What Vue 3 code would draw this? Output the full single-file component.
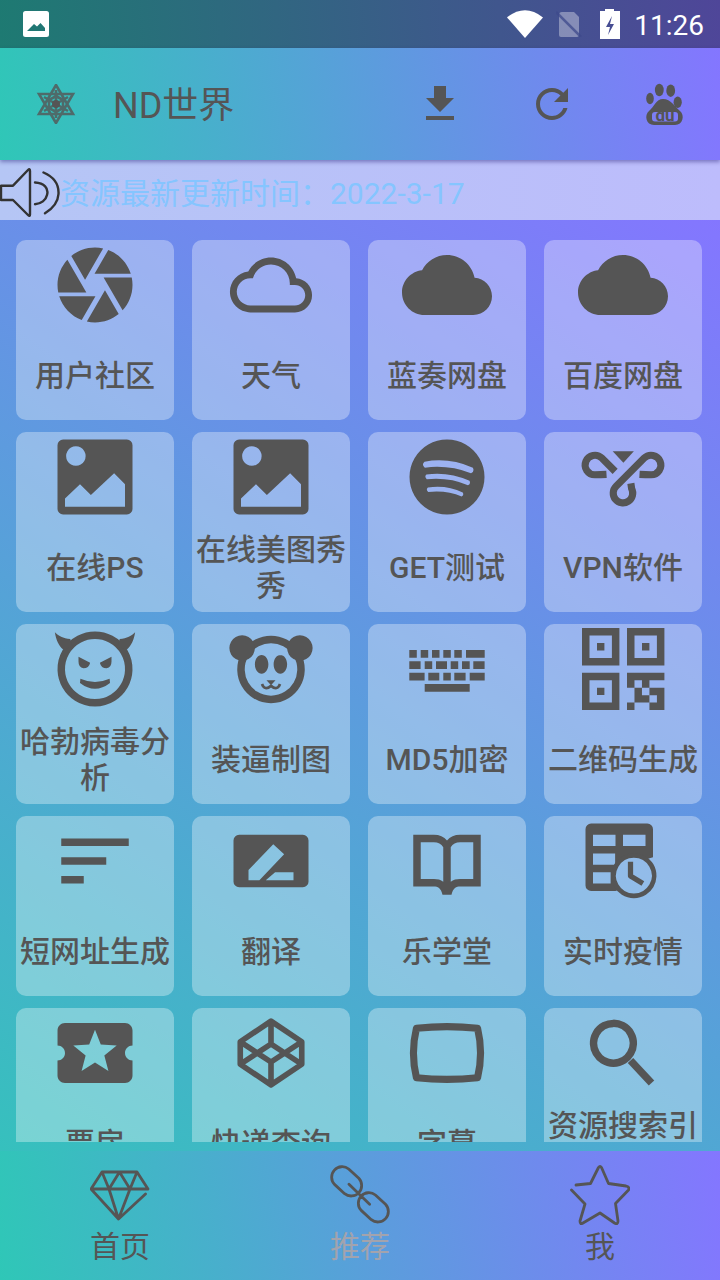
<template>
  <div class="screen">
    <div class="status-bar">
      <svg class="status-pic" viewBox="0 0 26 26">
        <path d="M2.5 0h21A2.5 2.5 0 0 1 26 2.5v21a2.5 2.5 0 0 1-2.5 2.5h-21A2.5 2.5 0 0 1 0 23.5v-21A2.5 2.5 0 0 1 2.5 0zM4 20h18v-3l-4.500-5-3.500 3.500-3-2.500z" fill="#fff" fill-rule="evenodd" />
      </svg>
      <div class="status-right">
        <svg class="st-wifi" viewBox="0 0 36 28">
          <path d="M0 7.4Q18-7 36 7.4L18 28z" fill="#fff" />
        </svg>
        <svg class="st-sim" viewBox="0 0 26 26">
          <path d="M6 1h12l5 5v18a2 2 0 0 1-2 2H5a2 2 0 0 1-2-2V4a3 3 0 0 1 3-3z" fill="#fff" fill-opacity=".35" />
          <path d="M0 1l25 25" stroke="#3e4a8c" stroke-width="2.5" opacity=".75" />
        </svg>
        <svg class="st-batt" viewBox="0 0 20 30">
          <path d="M5 0h9v2h6v28H0V2h5zM12 7l-6 11h4l-2 8 6-11h-4z" fill="#fff" fill-rule="evenodd" />
        </svg>
        <span class="clock">11:26</span>
      </div>
    </div>

    <header class="toolbar">
      <svg class="logo" viewBox="0 0 40 40">
        <path d="M20 1L37 30H3zM20 39L3 10H37zM20 6V34M8 13L32 27M32 13L8 27M20 12l7 4v8L20 28l-7-4v-8z" fill="none" stroke="#555" stroke-width="2.6" opacity=".8" />
        <circle cx="20" cy="20" r="4" fill="#555" />
      </svg>
      <span class="app-title">ND世界</span>
      <div class="tool-icons">
        <svg class="tool" viewBox="0 0 24 24"><path d="M19 9h-4V3H9v6H5l7 7 7-7zM5 18v2h14v-2H5z" /></svg>
        <svg class="tool" viewBox="0 0 24 24"><path d="M17.65 6.35C16.2 4.9 14.21 4 12 4c-4.42 0-7.99 3.58-7.99 8s3.57 8 7.99 8c3.73 0 6.84-2.55 7.73-6h-2.08c-.82 2.33-3.04 4-5.65 4-3.31 0-6-2.69-6-6s2.69-6 6-6c1.66 0 3.14.69 4.22 1.78L13 11h7V4l-2.35 2.35z" /></svg>
        <svg class="tool" viewBox="10 10 48 48">
          <ellipse cx="20" cy="28.5" rx="3.8" ry="5.7" />
          <ellipse cx="29.3" cy="20" rx="4.4" ry="6.2" />
          <ellipse cx="40.7" cy="20.7" rx="4.4" ry="6.2" />
          <ellipse cx="47.7" cy="32.3" rx="4.1" ry="5.7" />
          <path fill-rule="evenodd" d="M33 29C26 29 24 37 19 41C14 45 16 55 24 55H45C53 55 55 45 50 41C45 37 41 29 33 29zM25 42h20a3 3 0 0 1 3 3v3.500a3 3 0 0 1-3 3H25a3 3 0 0 1-3-3V45a3 3 0 0 1 3-3z" />
          <text x="35" y="51" text-anchor="middle" class="du">du</text>
        </svg>
      </div>
    </header>

    <div class="notice">
      <svg class="speaker" viewBox="0 7 60 58">
        <path d="M1 30.7H13L28 15Q30 13 30 16V59.5Q30 62 28 60L13 45H1ZM35 27.5C44 28 49 33 47 40C46 45 41 49 35 49.3M43.500 17.5C54 22 59 30 58.5 39C58 47 52 54 45 58.3" />
      </svg>
      <span class="notice-text">资源最新更新时间：2022-3-17</span>
    </div>

    <main class="grid">
      <div v-for="item in items" :key="item.label" class="card">
        <svg class="card-icon" :viewBox="item.box || '0 0 24 24'">
          <path
            v-for="(p, i) in item.parts"
            :key="i"
            :d="p.d"
            :class="p.w ? 'line' : 'solid'"
            :stroke-width="p.w"
          />
        </svg>
        <div class="card-label">{{ item.label }}</div>
      </div>
    </main>

    <nav class="bottom-nav">
      <div class="nav-item">
        <svg class="nav-icon" viewBox="0 0 60 60">
          <path d="M12 7H47L58 24H1ZM1 24L28.5 54L55.5 29M12 7L19 24L29.5 7L40 24L47 7M19 24L28.5 54L40 24" />
        </svg>
        <span>首页</span>
      </div>
      <div class="nav-item active">
        <svg class="nav-icon" viewBox="0 0 60 60">
          <path d="M18.7 4L28.8 13.300A10.500 10.500 0 0 1 14.600 28.700L4.500 19.400A10.500 10.500 0 0 1 18.700 4zM45.400 30L55.500 39.300A10.500 10.500 0 0 1 41.300 54.700L31.200 45.400A10.500 10.500 0 0 1 45.400 30zM19 19.300L39.600 39.300" />
        </svg>
        <span>推荐</span>
      </div>
      <div class="nav-item">
        <svg class="nav-icon" viewBox="0 0 60 60">
          <path d="M6 20L20.500 18.500L28.500 2.500Q30 .5 31.500 2.500L38.500 18.500L56 21Q60 22 58.500 25L45.500 38.500L48 56Q48 60 44.500 58L30 48L13 58Q10 60 10 56L15 39L1.500 25" />
        </svg>
        <span>我</span>
      </div>
    </nav>
  </div>
</template>

<script setup>
// builds one path out of [x, y, w, h] boxes, in 24-unit icon space
const boxes = (list, k = 1) =>
  list.map(([x, y, w, h]) => `M${x * k} ${y * k}h${w * k}v${h * k}h${-w * k}z`).join('')

const px = 24 / 90

const keyboard = boxes([
  [7.3, 26, 7.5, 7.7], [18.7, 26, 7.5, 7.7], [30, 26, 7.5, 7.7], [41.3, 26, 7.5, 7.7], [52.3, 26, 7.5, 7.7], [64, 26, 18.7, 7.7],
  [7.3, 37.3, 11.3, 7.7], [22.7, 37.3, 7.5, 7.7], [34, 37.3, 11, 7.7], [48.7, 37.3, 7.5, 7.7], [60, 37.3, 7.7, 7.7], [71.3, 37.3, 11.3, 7.7],
  [7.3, 48.7, 15.3, 7.7], [26.3, 48.7, 11, 7.7], [41.3, 48.7, 7.5, 7.7], [52.3, 48.7, 11.3, 7.7], [67.7, 48.7, 15, 7.7],
  [22.7, 60, 45, 7.7],
], px)

const finder = (x, y) => [[x, y, 37.4, 37.4], [x + 7.5, y + 7.5, 22.4, 22.4], [x + 15, y + 15, 7.4, 7.4]]
const qrRows = ['11111', '10100', '01011', '01101', '10011']
const qrCells = qrRows.flatMap((row, r) =>
  [...row].flatMap((on, c) => (on === '1' ? [[49 + c * 7.48, 48.7 + r * 7.48, 7.48, 7.48]] : []))
)
const qr = boxes([...finder(4, 4), ...finder(49, 4), ...finder(4, 48.7), ...qrCells], px)

const picture =
  'M3.5 2h17A1.500 1.500 0 0 1 22 3.500v17a1.500 1.500 0 0 1-1.500 1.500h-17A1.500 1.500 0 0 1 2 20.500v-17A1.500 1.500 0 0 1 3.500 2zM6.900 3.800a2.600 2.600 0 1 0 .001 0zM4 17.700L8 13.900L10.900 16.800L17.100 11L20 13.900V19.900H4z'

const cloud =
  'M19.350 10.040C18.670 6.590 15.640 4 12 4 9.110 4 6.600 5.640 5.350 8.040 2.340 8.360 0 10.910 0 14c0 3.310 2.690 6 6 6h13c2.760 0 5-2.240 5-5 0-2.640-2.050-4.780-4.650-4.960z'

const items = [
  { label: '用户社区', parts: [{ d: 'M9.400 10.500l4.770-8.260C13.470 2.090 12.750 2 12 2c-2.400 0-4.600.85-6.320 2.250l3.660 6.350.06-.1zM21.540 9c-.92-2.920-3.150-5.260-6-6.340L11.880 9h9.660zm.26 1h-7.490l.29.5 4.760 8.250C21 16.970 22 14.610 22 12c0-.69-.07-1.350-.2-2zM8.540 12l-3.900-6.750C3.010 7.030 2 9.390 2 12c0 .69.07 1.350.2 2h7.490l-1.150-2zm-6.080 3c.92 2.920 3.150 5.260 6 6.340L12.120 15H2.460zm11.270 0l-3.900 6.760c.7.15 1.420.24 2.170.24 2.400 0 4.600-.85 6.320-2.250l-3.660-6.350-.93 1.600z' }] },
  { label: '天气', box: '-1.15 -1.15 26.3 26.3', parts: [{ d: 'M19.350 10.040C18.670 6.590 15.640 4 12 4 9.110 4 6.600 5.640 5.350 8.040 2.340 8.360 0 10.910 0 14c0 3.310 2.690 6 6 6h13c2.760 0 5-2.240 5-5 0-2.640-2.050-4.780-4.650-4.960zM19 18H6c-2.210 0-4-1.790-4-4s1.790-4 4-4h.71C7.370 7.690 9.480 6 12 6c3.040 0 5.500 2.460 5.500 5.500v.5H19c1.660 0 3 1.340 3 3s-1.340 3-3 3z' }] },
  { label: '蓝奏网盘', parts: [{ d: cloud }] },
  { label: '百度网盘', parts: [{ d: cloud }] },
  { label: '在线PS', parts: [{ d: picture }] },
  { label: '在线美图秀秀', parts: [{ d: picture }] },
  // the rings are cut out of the disc
  { label: 'GET测试', parts: [{ d: 'M12 2a10 10 0 1 0 .001 0zM6 7.900Q12.500 6.700 18.900 9.500Q19.400 10.600 18.400 11Q12.500 8.700 6.100 9.500Q5.100 8.700 6 7.900zM6.500 11.300Q12.500 10.500 18 13Q18.400 13.900 17.600 14.200Q12.500 12 6.600 12.600Q5.900 11.900 6.500 11.300zM6.900 14.800Q12 14.100 16.200 16.100Q16.600 16.900 15.900 17.200Q12 15.500 7 16Q6.300 15.400 6.900 14.800z' }] },
  {
    label: 'VPN软件',
    parts: [
      { d: 'M9.250 5.100H14.900L12.100 8.200z' },
      { d: 'M16.400 11.300Q18 11.400 19.500 11.400A2.600 2.600 0 1 0 17.660 6.960L10.160 14.460A2.600 2.600 0 1 0 14.300 15.100L14.100 13.700', w: 1.9 },
      { d: 'M7.600 11.300Q6 11.400 4.500 11.400A2.600 2.600 0 1 1 6.340 6.960L9.900 10.500', w: 1.9 },
    ],
  },
  {
    label: '哈勃病毒分析',
    parts: [
      { d: 'M12 3a9 9 0 1 0 .001 0z', w: 2 },
      { d: 'M1.300 2.200C2.200 3.200 3.500 3.800 5.400 4L6 6L3.500 6.800C2.300 5.800 1.600 4.200 1.300 2.200zM22.700 2.200C21.800 3.200 20.500 3.800 18.600 4L18 6L20.500 6.800C21.700 5.800 22.400 4.200 22.700 2.200z' },
      { d: 'M7.600 8.700L10.700 10.300Q10.400 11.800 8.900 11.800Q7.600 11.600 7.600 10zM16.400 8.700L13.300 10.300Q13.600 11.800 15.100 11.800Q16.400 11.600 16.400 10z' },
      { d: 'M8.100 14.600Q12 16.300 15.900 14.600L16 15.700Q12 18.800 8 15.700z' },
    ],
  },
  {
    label: '装逼制图',
    parts: [
      { d: 'M12 4.100a8 8 0 1 0 .001 0z', w: 2 },
      { d: 'M4.300 3a3.400 3.400 0 1 0 .001 0zM19.700 3a3.400 3.400 0 1 0 .001 0z' },
      { d: 'M9.500 8.250c-1 0-1.800 1.100-1.800 2.500s.8 2.500 1.800 2.500 1.800-1.100 1.800-2.500-.8-2.500-1.800-2.500zM14.500 8.250c-1 0-1.800 1.100-1.800 2.500s.8 2.500 1.800 2.500 1.800-1.100 1.800-2.500-.8-2.500-1.800-2.500z' },
      { d: 'M10.800 15h2.400L12 16.300z' },
      { d: 'M9.600 16Q10.300 17.900 12 16.500Q13.700 17.900 14.400 16', w: 0.7 },
    ],
  },
  { label: 'MD5加密', parts: [{ d: keyboard }] },
  { label: '二维码生成', parts: [{ d: qr }] },
  { label: '短网址生成', parts: [{ d: 'M3 18h6v-2H3v2zM3 6v2h18V6H3zm0 7h12v-2H3v2z' }] },
  { label: '翻译', parts: [{ d: 'M3.500 5h17A1.500 1.500 0 0 1 22 6.500v11a1.500 1.500 0 0 1-1.500 1.500h-17A1.500 1.500 0 0 1 2 17.500v-11A1.500 1.500 0 0 1 3.500 5zM6 14.400L12.600 7.500L15.500 10.200L8.900 17.100H6zM10.600 17.100L13.100 15H18V17.100z' }] },
  { label: '乐学堂', parts: [{ d: 'M3 5H8.500C10 5 11.200 5.500 12 6.500C12.800 5.500 14 5 15.500 5H21V18.800H15.500C14.500 18.800 13.600 19.200 13.200 21H10.800C10.400 19.200 9.500 18.800 8.500 18.800H3zM5 7V16.800H8.500C9.500 16.800 10.300 17 11 17.500V8.300C10.500 7.500 9.600 7 8.500 7zM19 7V16.800H15.500C14.500 16.800 13.700 17 13 17.500V8.300C13.500 7.500 14.400 7 15.500 7z' }] },
  {
    label: '实时疫情',
    parts: [
      { d: 'M3.500 2H18.500A1.500 1.500 0 0 1 20 3.500V11L18 11.600A5.300 5.300 0 0 0 11.100 19.600L10 20H3.500A1.500 1.500 0 0 1 2 18.500V3.500A1.500 1.500 0 0 1 3.500 2zM4 5V8H10V5zM12 5V8H18V5zM4 10V13H9.900V10zM4 15V18H8.700V15z' },
      { d: 'M14.900 10.500a5.400 5.400 0 1 0 .001 0z', w: 1.25 },
      { d: 'M14 12.200V16L17.300 18', w: 1.4 },
    ],
  },
  { label: '票房', parts: [{ d: 'M20 12c0-1.100.9-2 2-2V6c0-1.100-.9-2-2-2H4c-1.100 0-1.990.9-1.990 2v4c1.100 0 1.990.9 1.990 2s-.89 2-2 2v4c0 1.100.9 2 2 2h16c1.100 0 2-.9 2-2v-4c-1.100 0-2-.9-2-2zm-4.420 4.800L12 14.500l-3.580 2.300 1.080-4.120-3.290-2.690 4.240-.25L12 5.800l1.540 3.950 4.240.25-3.290 2.690 1.090 4.110z' }] },
  { label: '快递查询', parts: [{ d: 'M12 3.500L20.200 9V15L12 20.500L3.800 15V9ZM12 3.500V9.600M12 14.400V20.500M3.800 9L12 14.400L20.200 9M3.800 15L12 9.600L20.200 15', w: 1.5 }] },
  { label: '字幕', parts: [{ d: 'M3.850 5.400Q12 4.500 20.150 5.400Q21.750 12 20.150 18.600Q12 19.500 3.850 18.600Q2.250 12 3.850 5.400z', w: 1.9 }] },
  {
    label: '资源搜索引擎',
    parts: [
      { d: 'M9.450 4.100a5.300 5.300 0 1 0 .001 0z', w: 2 },
      { d: 'M14 14L19.600 20', w: 2 },
    ],
  },
]
</script>

<style scoped>
.screen {
  width: 720px;
  height: 1280px;
  display: flex;
  flex-direction: column;
  overflow: hidden;
  background: linear-gradient(34deg, #2fc7b7, #8476ff) 0 220px / 720px 1060px no-repeat;
  font-family: Roboto, "Noto Sans CJK SC", sans-serif;
  color: #555;
}

.status-bar {
  height: 48px;
  flex: none;
  display: flex;
  align-items: center;
  justify-content: space-between;
  padding: 0 16px 0 23px;
  background: linear-gradient(86deg, #1e7a72, #4f4699);
}

.status-pic {
  width: 26px;
  height: 26px;
}

.status-right {
  display: flex;
  align-items: center;
}

.st-wifi {
  width: 36px;
  height: 28px;
  margin-right: 13px;
}

.st-sim {
  width: 26px;
  height: 26px;
  margin-right: 18px;
}

.st-batt {
  width: 20px;
  height: 30px;
  margin-right: 14px;
}

.clock {
  margin-top: 3px;
  font-size: 28px;
  color: #fff;
  line-height: 45px;
}

.toolbar {
  height: 112px;
  flex: none;
  position: relative;
  z-index: 1;
  display: flex;
  align-items: center;
  padding-left: 36px;
  background: linear-gradient(81deg, #2fc7b7, #8476ff);
  box-shadow: 0 2px 4px rgba(40, 30, 120, 0.45);
}

.logo {
  width: 40px;
  height: 40px;
}

.app-title {
  margin: 0 0 4px 37px;
  font-size: 36px;
}

.tool-icons {
  margin-left: auto;
  display: flex;
  align-items: center;
  gap: 64px;
  padding-right: 32px;
}

.tool {
  width: 48px;
  height: 48px;
  fill: #555;
}

.du {
  font-size: 17px;
  font-weight: 700;
}

.notice {
  height: 60px;
  padding-top: 2px;
  box-sizing: border-box;
  flex: none;
  display: flex;
  align-items: center;
  background: linear-gradient(90deg, #b5c6f5, #bdbcfc);
}

.speaker {
  width: 60px;
  height: 58px;
  flex: none;
  fill: none;
  stroke: #333;
  stroke-width: 2.4;
  stroke-linecap: round;
  stroke-linejoin: round;
}

.notice-text {
  font-size: 30px;
  color: #85c5ff;
}

.grid {
  flex: 1;
  min-height: 0;
  overflow: hidden;
  margin-bottom: 9px;
  padding: 20px 18px 0 16px;
  display: grid;
  grid-template-columns: repeat(4, 158px);
  grid-auto-rows: 180px;
  gap: 12px 18px;
}

.card {
  display: flex;
  flex-direction: column;
  align-items: center;
  border-radius: 10px;
  background: rgba(255, 255, 255, 0.33);
  overflow: hidden;
}

.card-icon {
  width: 90px;
  height: 90px;
  flex: none;
}

.solid {
  fill: #555;
  fill-rule: evenodd;
}

.line {
  fill: none;
  stroke: #555;
  stroke-linejoin: round;
}

.card-label {
  flex: 1;
  margin-top: 2px;
  width: 100%;
  display: flex;
  align-items: center;
  justify-content: center;
  text-align: center;
  font-size: 30px;
  font-weight: 500;
  line-height: 36px;
}

.bottom-nav {
  height: 129px;
  flex: none;
  display: flex;
  background: linear-gradient(80deg, #2fc7b7, #8476ff);
}

.nav-item {
  flex: 1;
  display: flex;
  flex-direction: column;
  align-items: center;
  padding-top: 14px;
  font-size: 30px;
  line-height: 40px;
}

.nav-item.active {
  color: #a3a3ad;
}

.nav-icon {
  width: 60px;
  height: 60px;
  fill: none;
  stroke: #555;
  stroke-width: 2.8;
  stroke-linecap: round;
  stroke-linejoin: round;
  margin-bottom: 2px;
}
</style>
